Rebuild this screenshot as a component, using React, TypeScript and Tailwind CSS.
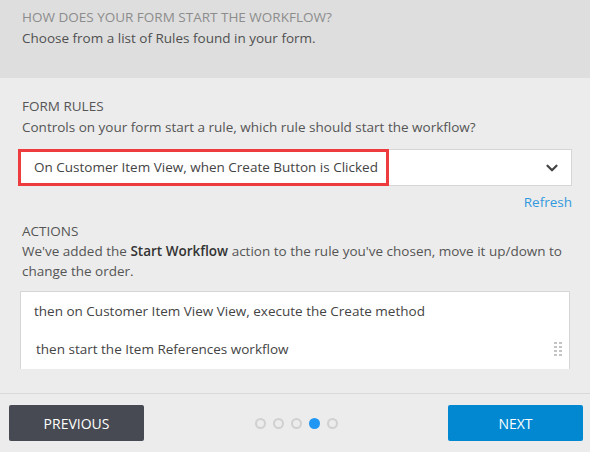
import { ChevronDown } from 'lucide-react';

const font = { fontFamily: '"Open Sans", "Noto Sans", sans-serif' };

function DragHandle() {
  return (
    <div className="grid grid-cols-2 gap-x-[2px] gap-y-[2px]">
      {Array.from({ length: 8 }).map((_, i) => (
        <span key={i} className="block h-[2px] w-[3px] bg-[#c4c4c4]" />
      ))}
    </div>
  );
}

export default function App() {
  const steps = [0, 1, 2, 3, 4];
  const active = 3;

  return (
    <div className="flex h-[452px] w-[590px] flex-col bg-[#ececec]" style={font}>
      {/* header */}
      <div className="h-[78px] bg-[#dedede] px-[22px] pt-[7px]">
        <p className="text-[13.5px] leading-[21px] text-[#8c8c8c]">HOW DOES YOUR FORM START THE WORKFLOW?</p>
        <p className="text-[13.5px] leading-[21px] text-[#505050]">Choose from a list of Rules found in your form.</p>
      </div>

      {/* body */}
      <div className="flex-1 overflow-hidden px-[18px] pt-[18px]">
        <div className="px-[4px]">
          <p className="text-[13.5px] leading-[21px] text-[#555]">FORM RULES</p>
          <p className="text-[13.5px] leading-[21px] text-[#555]">
            Controls on your form start a rule, which rule should start the workflow?
          </p>
        </div>

        <div className="relative mt-[11px] flex h-[37px] items-center justify-between border border-[#d6d6d6] bg-white pl-[15px] pr-[10px]">
          <span className="text-[13.5px] text-[#444]">On Customer Item View, when Create Button is Clicked</span>
          <ChevronDown size={18} strokeWidth={3} className="text-[#444]" />
          <div className="pointer-events-none absolute -left-[1px] -top-[1px] h-[37px] w-[371px] border-[3px] border-[#ee3b3e]" />
        </div>

        <div className="mt-[6px] flex justify-end">
          <span className="text-[13.5px] leading-[21px] text-[#3399dd]">Refresh</span>
        </div>

        <div className="mt-[8px] px-[4px]">
          <p className="text-[13.5px] leading-[20px] text-[#555]">ACTIONS</p>
          <p className="text-[13.5px] leading-[20px] text-[#555]">
            We've added the <span className="font-semibold text-[#333]">Start Workflow</span> action to the rule
            you've chosen, move it up/down to change the order.
          </p>
        </div>

        <div className="mx-[2px] mt-[10px] h-[78px] border-x border-t border-[#d6d6d6] bg-white">
          <div className="flex h-[38px] items-center pl-[13px]">
            <span className="text-[13.5px] text-[#444]">then on Customer Item View View, execute the Create method</span>
          </div>
          <div className="flex h-[38px] items-center justify-between pl-[15px] pr-[7px]">
            <span className="text-[13.5px] text-[#444]">then start the Item References workflow</span>
            <DragHandle />
          </div>
        </div>
      </div>

      {/* footer */}
      <div className="flex h-[59px] items-center justify-between border-t border-[#d9d9d9] pl-[9px] pr-[7px]">
        <button className="flex h-[36px] w-[135px] items-center justify-center rounded-[2px] bg-[#474a52] text-[14px] font-medium text-white">
          PREVIOUS
        </button>
        <div className="flex items-center gap-[7px]">
          {steps.map((s) => (
            <span
              key={s}
              className={
                s === active
                  ? 'block h-[11px] w-[11px] rounded-full bg-[#2196f3]'
                  : 'block h-[11px] w-[11px] rounded-full border-2 border-[#d0d0d0]'
              }
            />
          ))}
        </div>
        <button className="flex h-[36px] w-[135px] items-center justify-center rounded-[2px] bg-[#0288d1] text-[14px] font-medium text-white">
          NEXT
        </button>
      </div>
    </div>
  );
}
